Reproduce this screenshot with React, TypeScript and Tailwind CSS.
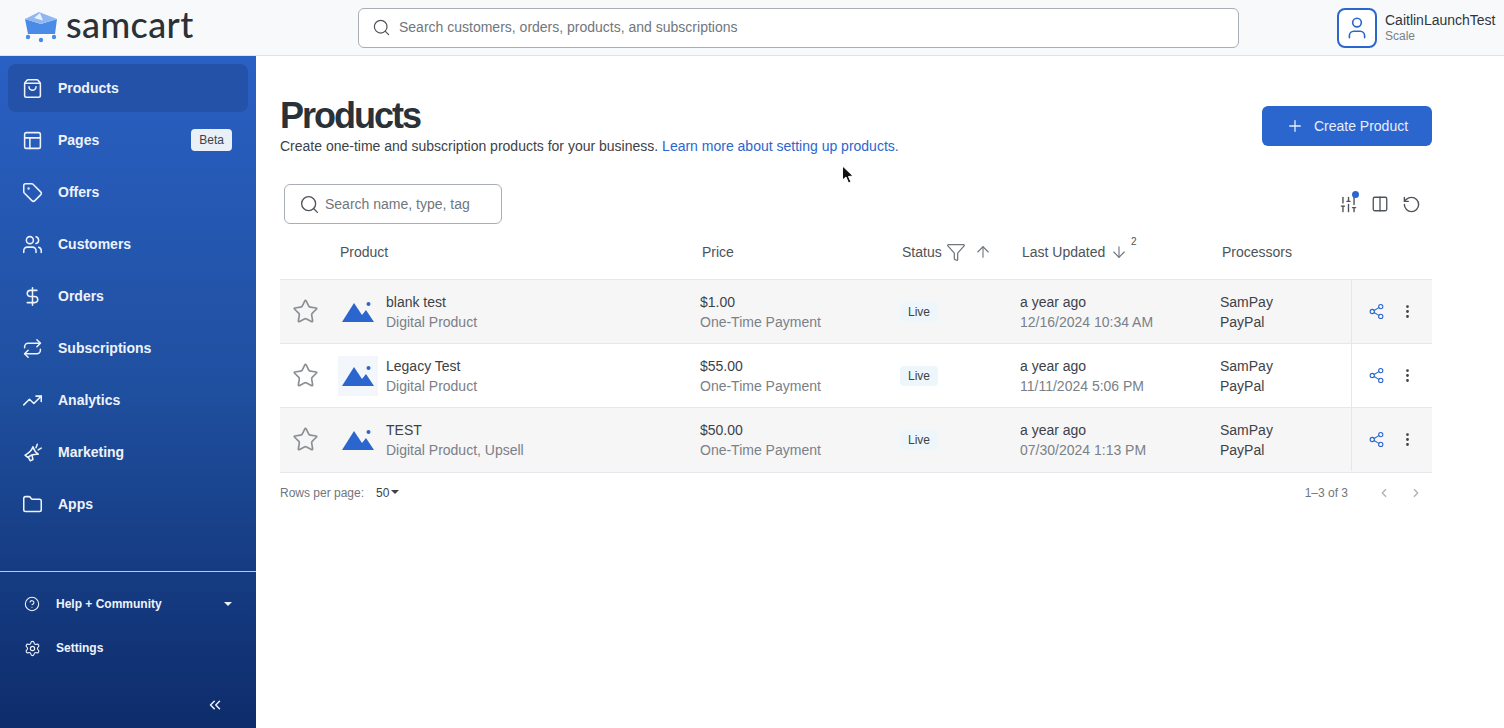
import {
  ArrowDown,
  ArrowUp,
  ChevronLeft,
  ChevronRight,
  ChevronsLeft,
  CircleHelp,
  Columns2,
  DollarSign,
  EllipsisVertical,
  Filter,
  Folder,
  PanelsTopLeft,
  Plus,
  Repeat,
  RotateCcw,
  Search,
  Settings,
  Share2,
  ShoppingBag,
  SlidersVertical,
  Star,
  Tag,
  TrendingUp,
  User,
  Users,
} from "lucide-react";

// ================= DRAWINGS =================
function MarketingIcon({ size, strokeWidth }: { size: number; strokeWidth: number }) {
  return (
    <svg
      width={size}
      height={size}
      viewBox="0 0 24 24"
      fill="none"
      stroke="currentColor"
      strokeWidth={strokeWidth}
      strokeLinecap="round"
      strokeLinejoin="round"
    >
      <path d="M12.5 5.5 C13.5 9 15.5 12 18.5 14 C14 13.5 10 14.5 6.5 17.5 L3.5 15 C7.5 13 11 10 12.5 5.5 Z" />
      <path d="M7.5 18 L9.5 21.5 L12.5 20 L11.5 15.5" />
      <path d="M16 6.5 L17.5 2.5" />
      <path d="M18.5 9 L22 7" />
    </svg>
  );
}

function Logo() {
  return (
    <svg width="34" height="32" viewBox="0 0 34 32">
      <path d="M1 8 L17 13 L33 8 L31 23 L4 23 Z" fill="#4a8be8" />
      <path d="M1 8 L15 1 L33 8 L17 13 Z" fill="#8fb8f2" />
      <path d="M10 7 L16 2 L19 9.5 Z" fill="#eaf2fd" />
      <circle cx="4" cy="26" r="2.2" fill="#4a8be8" />
      <circle cx="17" cy="29" r="2.2" fill="#4a8be8" />
      <circle cx="30" cy="26" r="2.2" fill="#4a8be8" />
    </svg>
  );
}

function Thumb() {
  return (
    <svg width="34" height="24" viewBox="0 0 34 24">
      <path d="M1 22 L13 3 L21 15 L25 10 L33 22 Z" fill="#2b66cf" />
      <circle cx="27.5" cy="4" r="2" fill="#2b66cf" />
    </svg>
  );
}

function Cursor() {
  return (
    <svg width="14" height="20" viewBox="0 0 14 20" className="absolute left-[841px] top-[165px]">
      <path d="M1.5 1 L1.5 15 L5 12 L7.5 18 L10 17 L7.5 11.5 L12 11 Z" fill="#111" stroke="#fff" strokeWidth="1" />
    </svg>
  );
}

// ================= DATA =================
const navItems = [
  { label: "Products", icon: ShoppingBag, active: true },
  { label: "Pages", icon: PanelsTopLeft, badge: "Beta" },
  { label: "Offers", icon: Tag },
  { label: "Customers", icon: Users },
  { label: "Orders", icon: DollarSign },
  { label: "Subscriptions", icon: Repeat },
  { label: "Analytics", icon: TrendingUp },
  { label: "Marketing", icon: MarketingIcon },
  { label: "Apps", icon: Folder },
];

const rows = [
  { name: "blank test", type: "Digital Product", price: "$1.00", date: "12/16/2024 10:34 AM", tint: true },
  { name: "Legacy Test", type: "Digital Product", price: "$55.00", date: "11/11/2024 5:06 PM", tint: false },
  { name: "TEST", type: "Digital Product, Upsell", price: "$50.00", date: "07/30/2024 1:13 PM", tint: true },
];

const gridCols = "grid grid-cols-[60px_360px_200px_120px_200px_131px_81px]";

// ================= COMPONENT =================
export default function App() {
  return (
    <div className="relative flex h-[728px] w-[1504px] flex-col overflow-hidden bg-white font-['Liberation_Sans',sans-serif] text-[#3c4248]">
      {/* HEADER */}
      <header className="flex h-[56px] shrink-0 items-center border-b border-[#dfe3e8] bg-[#f8f9fb]">
        <div className="flex w-[358px] items-center gap-[8px] pb-[2px] pl-[24px]">
          <Logo />
          <span className="pb-[5px] font-['Lato',sans-serif] text-[36px] leading-none font-medium tracking-[0.4px] text-[#2a3138]">
            samcart
          </span>
        </div>
        <div className="flex h-[40px] w-[881px] items-center gap-[8px] rounded-[6px] border border-[#a9aeb5] bg-white pl-[13px]">
          <Search size={19} strokeWidth={1.5} className="text-[#4d5359]" />
          <span className="text-[14px] text-[#70767d]">Search customers, orders, products, and subscriptions</span>
        </div>
        <div className="ml-[98px] flex items-center gap-[8px]">
          <div className="flex h-[40px] w-[40px] items-center justify-center rounded-[8px] border-2 border-[#2b66cf] bg-white">
            <User size={26} strokeWidth={1.5} className="text-[#2b66cf]" />
          </div>
          <div className="flex flex-col pb-[1px]">
            <span className="text-[14px] leading-[18px] whitespace-nowrap text-[#2f353b]">CaitlinLaunchTest</span>
            <span className="text-[12px] leading-[15px] text-[#7a8087]">Scale</span>
          </div>
        </div>
      </header>

      <div className="flex min-h-0 flex-1">
        {/* SIDEBAR */}
        <aside className="flex w-[256px] shrink-0 flex-col bg-gradient-to-b from-[#2a60c4] via-[#1f4f9f] to-[#0e2c6b] text-[#eef3fb]">
          <nav className="flex h-[515px] flex-col gap-[4px] px-[8px] pt-[8px]">
            {navItems.map((item) => (
              <div
                key={item.label}
                className={`flex h-[48px] shrink-0 items-center rounded-[8px] pr-[16px] pl-[14px] ${
                  item.active ? "bg-[#2452a8]" : ""
                }`}
              >
                <item.icon size={21} strokeWidth={1.75} />
                <span className="ml-[15px] text-[14px] font-bold">{item.label}</span>
                {item.badge && (
                  <span className="ml-auto rounded-[4px] bg-[#e9f0f8] px-[8px] py-[2px] text-[12px] text-[#3c4248]">
                    {item.badge}
                  </span>
                )}
              </div>
            ))}
          </nav>

          <div className="flex flex-1 flex-col border-t border-[#b9c9e6] px-[24px]">
            <div className="mt-[21px] flex h-[22px] items-center">
              <CircleHelp size={16} strokeWidth={1.6} />
              <span className="ml-[16px] text-[12px] font-bold">Help + Community</span>
              <span className="ml-auto h-0 w-0 border-x-[4px] border-t-[4px] border-x-transparent border-t-[#eef3fb]" />
            </div>
            <div className="mt-[22px] flex h-[22px] items-center">
              <Settings size={17} strokeWidth={1.6} />
              <span className="ml-[15px] text-[12px] font-bold">Settings</span>
            </div>
            <div className="mt-[37px] flex justify-end pr-[8px]">
              <ChevronsLeft size={18} strokeWidth={2} />
            </div>
          </div>
        </aside>

        {/* MAIN */}
        <main className="flex w-[1248px] flex-col pt-[40px] pr-[72px] pl-[24px]">
          <div className="flex items-start justify-between">
            <div>
              <h1 className="text-[36px] leading-[40px] font-bold tracking-[-2px] text-[#2a3138]">Products</h1>
              <p className="text-[14px] leading-[20px] text-[#3c4248]">
                Create one-time and subscription products for your business.{" "}
                <span className="text-[#2b66cf]">Learn more about setting up products.</span>
              </p>
            </div>
            <button className="mt-[10px] flex h-[40px] w-[170px] items-center justify-center gap-[10px] rounded-[6px] bg-[#2b66cf] text-[14px] text-[#e6eefb]">
              <Plus size={18} strokeWidth={1.75} />
              Create Product
            </button>
          </div>

          {/* TOOLBAR */}
          <div className="mt-[28px] flex items-center justify-between pl-[4px]">
            <div className="flex h-[40px] w-[218px] items-center gap-[5px] rounded-[6px] border border-[#a9aeb5] pl-[14px]">
              <Search size={21} strokeWidth={1.5} className="text-[#4d5359]" />
              <span className="text-[14px] text-[#70767d]">Search name, type, tag</span>
            </div>
            <div className="flex items-center gap-[13px] pr-[11px] text-[#4d5359]">
              <div className="relative">
                <SlidersVertical size={19} strokeWidth={1.75} />
                <span className="absolute -top-[4px] -right-[1px] h-[7px] w-[7px] rounded-full bg-[#2b66cf]" />
              </div>
              <Columns2 size={18} strokeWidth={1.75} />
              <RotateCcw size={19} strokeWidth={1.75} />
            </div>
          </div>

          {/* TABLE HEAD */}
          <div className={`${gridCols} mt-[4px] h-[52px] items-center border-b border-[#e4e7ec] pb-[3px] text-[14px] text-[#4d5359]`}>
            <span />
            <span>Product</span>
            <span className="pl-[2px]">Price</span>
            <span className="flex items-center pl-[2px]">
              Status
              <Filter size={20} strokeWidth={1.5} className="ml-[4px] text-[#70767d]" />
              <ArrowUp size={18} strokeWidth={1.5} className="ml-[8px] text-[#70767d]" />
            </span>
            <span className="relative flex items-center pl-[2px]">
              Last Updated
              <ArrowDown size={18} strokeWidth={1.5} className="ml-[5px] text-[#70767d]" />
              <span className="absolute top-[-8px] left-[111px] text-[10px]">2</span>
            </span>
            <span className="pl-[2px]">Processors</span>
            <span />
          </div>

          {/* TABLE ROWS */}
          {rows.map((row) => (
            <div
              key={row.name}
              className={`${gridCols} items-center border-b border-[#e4e7ec] text-[14px] leading-[20px] ${
                row.name === "TEST" ? "h-[65px] pb-[1px]" : "h-[64px]"
              } ${row.tint ? "bg-[#f6f6f7]" : "bg-white"}`}
            >
              <div className="flex justify-center pr-[10px]">
                <Star size={27} strokeWidth={1.5} className="text-[#8b9096]" />
              </div>
              <div className="-ml-[2px] flex items-center gap-[8px]">
                <div
                  className={`flex h-[40px] w-[40px] items-center justify-center ${
                    row.tint ? "" : "bg-[#f3f7fb]"
                  }`}
                >
                  <Thumb />
                </div>
                <div>
                  <div>{row.name}</div>
                  <div className="text-[#7a8087]">{row.type}</div>
                </div>
              </div>
              <div>
                <div>{row.price}</div>
                <div className="text-[#7a8087]">One-Time Payment</div>
              </div>
              <div>
                <span className="rounded-[4px] bg-[#edf7fb] px-[8px] py-[3px] text-[12px]">Live</span>
              </div>
              <div>
                <div>a year ago</div>
                <div className="text-[#7a8087]">{row.date}</div>
              </div>
              <div>
                <div>SamPay</div>
                <div>PayPal</div>
              </div>
              <div className="flex h-full items-center gap-[14px] border-l border-[#e4e7ec] pl-[16px]">
                <Share2 size={17} strokeWidth={1.5} className="text-[#2b66cf]" />
                <EllipsisVertical size={17} strokeWidth={2} className="text-[#3c4248]" />
              </div>
            </div>
          ))}

          {/* PAGINATION */}
          <div className="flex h-[40px] items-center justify-between text-[12px] text-[#70767d]">
            <div className="flex items-center">
              Rows per page:
              <span className="ml-[12px] text-[#3c4248]">50</span>
              <span className="mb-[3px] ml-[2px] h-0 w-0 border-x-[4px] border-t-[4px] border-x-transparent border-t-[#3c4248]" />
            </div>
            <div className="flex items-center pr-[9px]">
              1–3 of 3
              <ChevronLeft size={14} className="ml-[29px] text-[#a9aeb5]" />
              <ChevronRight size={14} className="ml-[18px] text-[#a9aeb5]" />
            </div>
          </div>
        </main>
      </div>

      <Cursor />
    </div>
  );
}
